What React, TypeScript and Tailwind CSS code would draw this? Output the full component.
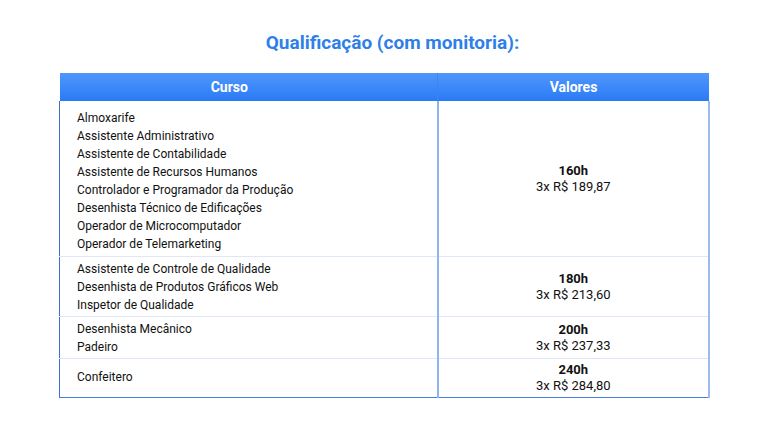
const rows = [
  {
    cursos: [
      "Almoxarife",
      "Assistente Administrativo",
      "Assistente de Contabilidade",
      "Assistente de Recursos Humanos",
      "Controlador e Programador da Produção",
      "Desenhista Técnico de Edificações",
      "Operador de Microcomputador",
      "Operador de Telemarketing",
    ],
    horas: "160h",
    valor: "3x R$ 189,87",
    pad: "pt-[8px] pb-[3px]",
  },
  {
    cursos: ["Assistente de Controle de Qualidade", "Desenhista de Produtos Gráficos Web", "Inspetor de Qualidade"],
    horas: "180h",
    valor: "3x R$ 213,60",
    pad: "pt-[3px] pb-[2px]",
  },
  {
    cursos: ["Desenhista Mecânico", "Padeiro"],
    horas: "200h",
    valor: "3x R$ 237,33",
    pad: "pt-[3px] pb-[2px]",
  },
  {
    cursos: ["Confeitero"],
    horas: "240h",
    valor: "3x R$ 284,80",
    pad: "pt-[3px] pb-[6px]",
  },
];

export default function App() {
  return (
    <div className="w-[760px] h-[428px] bg-white font-['Roboto',sans-serif] text-[#111]">
      <h1 className="pt-[32px] pl-[25px] text-center text-[19px] leading-[22px] font-bold text-[#2f7fe8]">
        Qualificação (com monitoria):
      </h1>
      <table className="ml-[59px] mt-[19px] w-[651px] border-collapse text-[12px]">
        <thead>
          <tr className="h-[28px] bg-gradient-to-b from-[#4f97fb] to-[#2a7af6] text-white">
            <th className="w-[378px] pr-[38px] font-bold text-[14px] border-r border-[#3d86f0]">Curso</th>
            <th className="font-bold text-[14px]">Valores</th>
          </tr>
        </thead>
        <tbody className="border-l border-b border-l-[#3a6fd2] border-b-[#4a7fd8] border-r-[2px] border-r-[#9bbaee]">
          {rows.map((r, i) => (
            <tr key={i} className="border-t border-[#dde7f8] first:border-t-0">
              <td className={`pl-[17px] ${r.pad} align-middle border-r-[2px] border-r-[#8fb3ee]`}>
                {r.cursos.map((c) => (
                  <div key={c} className="leading-[18px]">
                    {c}
                  </div>
                ))}
              </td>
              <td className="py-[3px] text-center align-middle leading-[16px] text-[13px]">
                <div className="font-bold">{r.horas}</div>
                <div>{r.valor}</div>
              </td>
            </tr>
          ))}
        </tbody>
      </table>
    </div>
  );
}
